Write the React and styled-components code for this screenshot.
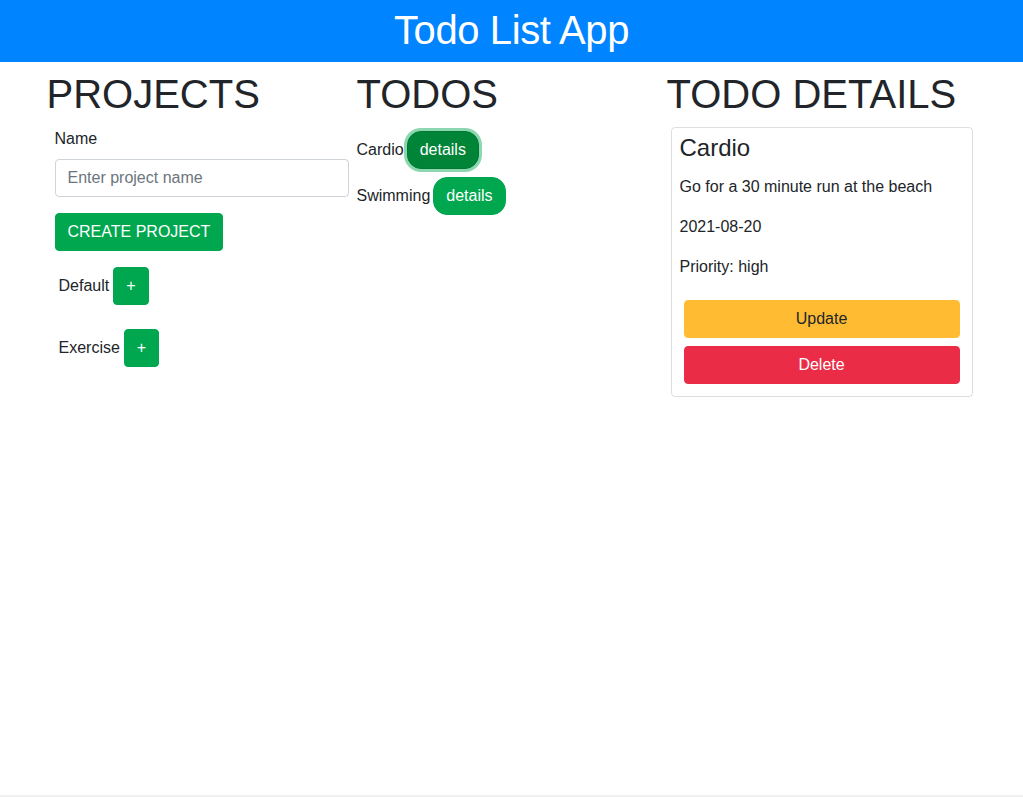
import React from "react";
import styled, { createGlobalStyle, css } from "styled-components";

const GlobalStyle = createGlobalStyle`
  *, *::before, *::after { box-sizing: border-box; }
  html, body { margin: 0; padding: 0; }
  body {
    font-family: "Liberation Sans", Arial, sans-serif;
    font-size: 16px;
    line-height: 1.5;
    color: #212529;
    background: #fff;
  }
`;

const Page = styled.div`
  min-height: 100vh;
  display: flex;
  flex-direction: column;
`;

const Header = styled.header`
  background: #0084ff;
  padding: 6px 0 8px;
  text-align: center;
`;

const AppTitle = styled.h1`
  margin: 0;
  font-size: 40px;
  font-weight: 400;
  line-height: 48px;
  color: #fff;
  letter-spacing: -0.4px;
`;

const Main = styled.main`
  width: 960px;
  margin: 0 auto;
  padding: 8px 15px 0;
  display: grid;
  grid-template-columns: repeat(3, 310px);
  align-items: start;
`;

const Column = styled.section`
  display: flex;
  flex-direction: column;
`;

const SectionTitle = styled.h2`
  margin: 0 0 9px;
  font-size: 40px;
  font-weight: 400;
  line-height: 48px;
  color: #212529;
`;

const Form = styled.form`
  padding: 0 8px;
  display: flex;
  flex-direction: column;
`;

const Label = styled.label`
  display: block;
  margin-bottom: 8px;
  line-height: 24px;
`;

const Input = styled.input`
  display: block;
  width: 100%;
  height: 38px;
  padding: 6px 12px;
  font: inherit;
  font-size: 16px;
  color: #495057;
  border: 1px solid #ced4da;
  border-radius: 4px;
  margin-bottom: 16px;
  &::placeholder { color: #6c757d; }
`;

const Button = styled.button`
  display: inline-block;
  font-family: inherit;
  font-size: 16px;
  line-height: 24px;
  padding: 6px 12px;
  border: 1px solid transparent;
  border-radius: ${(p) => (p.$pill ? "14px" : "4px")};
  cursor: pointer;
  white-space: nowrap;
  ${(p) =>
    p.$variant === "success" &&
    css`
      background: #00a74f;
      border-color: #00a74f;
      color: #fff;
    `}
  ${(p) =>
    p.$variant === "warning" &&
    css`
      background: #ffbc33;
      border-color: #ffbc33;
      color: #212529;
    `}
  ${(p) =>
    p.$variant === "danger" &&
    css`
      background: #ea2c46;
      border-color: #ea2c46;
      color: #fff;
    `}
  ${(p) =>
    p.$focused &&
    css`
      background: #008438;
      border-color: #007a33;
      box-shadow: 0 0 0 3px rgba(0, 167, 79, 0.45);
    `}
`;

const CreateButton = styled(Button)`
  align-self: flex-start;
  text-transform: uppercase;
`;

const ProjectList = styled.div`
  margin-top: 12px;
  padding: 0 8px;
  display: flex;
  flex-direction: column;
  gap: 16px;
`;

const ProjectRow = styled.div`
  display: flex;
  align-items: center;
  gap: 4px;
  padding: 4px;
`;

const TodoList = styled.div`
  display: flex;
  flex-direction: column;
`;

const TodoRow = styled.div`
  display: flex;
  align-items: center;
  gap: 3px;
  padding: 4px 0;
`;

const Card = styled.div`
  margin: 0 4px;
  border: 1px solid rgba(0, 0, 0, 0.13);
  border-radius: 4px;
  padding: 6px 8px 8px;
`;

const CardTitle = styled.h3`
  margin: 0 0 12px;
  font-size: 24px;
  font-weight: 400;
  line-height: 1.2;
`;

const CardText = styled.p`
  margin: 0 0 16px;
  line-height: 24px;
`;

const CardActions = styled.div`
  display: flex;
  flex-direction: column;
  gap: 8px;
  padding: 5px 4px 4px;
`;

const Footer = styled.footer`
  margin-top: auto;
  height: 2px;
  background: #f0f0f0;
`;

const projects = ["Default", "Exercise"];
const todos = [
  { title: "Cardio", focused: true },
  { title: "Swimming", focused: false },
];

export default function App() {
  return (
    <>
      <GlobalStyle />
      <Page>
        <Header>
          <AppTitle>Todo List App</AppTitle>
        </Header>
        <Main>
          <Column>
            <SectionTitle>PROJECTS</SectionTitle>
            <Form onSubmit={(e) => e.preventDefault()}>
              <Label htmlFor="project-name">Name</Label>
              <Input id="project-name" placeholder="Enter project name" />
              <CreateButton type="submit" $variant="success">
                Create Project
              </CreateButton>
            </Form>
            <ProjectList>
              {projects.map((p) => (
                <ProjectRow key={p}>
                  <span>{p}</span>
                  <Button $variant="success">+</Button>
                </ProjectRow>
              ))}
            </ProjectList>
          </Column>
          <Column>
            <SectionTitle>TODOS</SectionTitle>
            <TodoList>
              {todos.map((t) => (
                <TodoRow key={t.title}>
                  <span>{t.title}</span>
                  <Button $variant="success" $pill $focused={t.focused}>
                    details
                  </Button>
                </TodoRow>
              ))}
            </TodoList>
          </Column>
          <Column>
            <SectionTitle>TODO DETAILS</SectionTitle>
            <Card>
              <CardTitle>Cardio</CardTitle>
              <CardText>Go for a 30 minute run at the beach</CardText>
              <CardText>2021-08-20</CardText>
              <CardText>Priority: high</CardText>
              <CardActions>
                <Button $variant="warning">Update</Button>
                <Button $variant="danger">Delete</Button>
              </CardActions>
            </Card>
          </Column>
        </Main>
        <Footer />
      </Page>
    </>
  );
}
